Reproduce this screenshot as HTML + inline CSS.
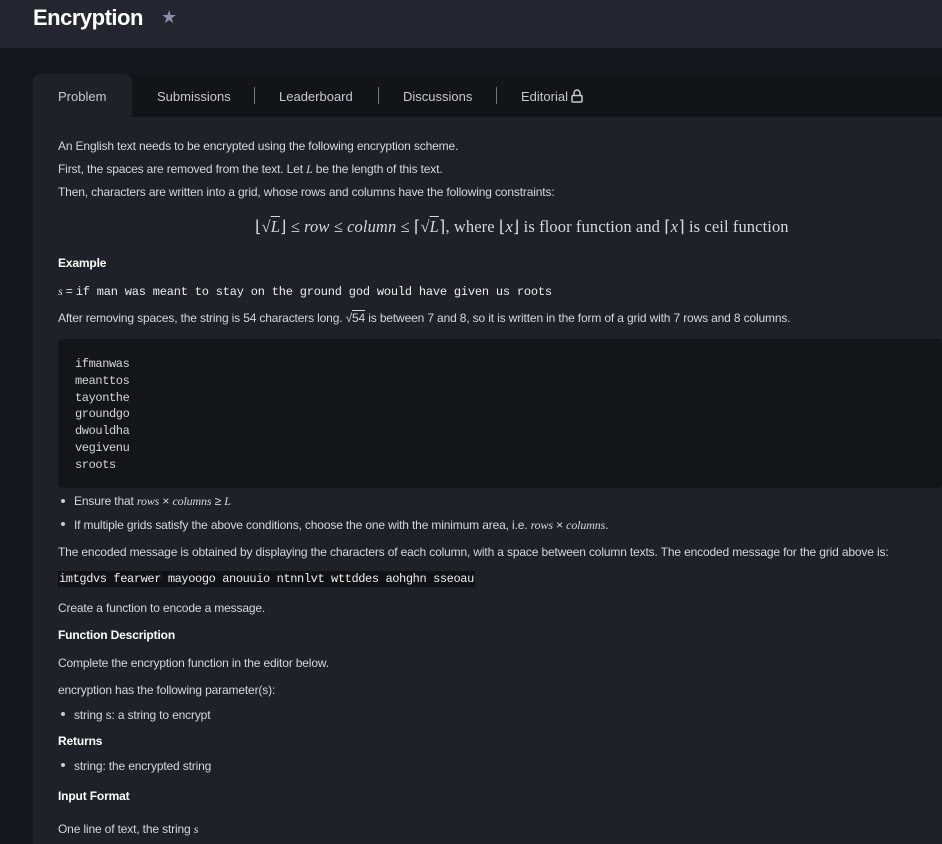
<!DOCTYPE html>
<html><head><meta charset="utf-8"><style>
*{margin:0;padding:0;box-sizing:border-box}
body{width:942px;height:844px;background:#16171c;overflow:hidden;font-family:"Liberation Sans",sans-serif;color:#d6d6de;position:relative}
.hdr{position:absolute;left:0;top:0;width:942px;height:48px;background:#24252e}
.title{position:absolute;left:33px;top:5px;font-size:22px;font-weight:bold;color:#fff;letter-spacing:-0.5px}
.star{position:absolute;left:161px;top:7px;font-size:18px;color:#8c8ca6}
.tabbar{position:absolute;left:33px;top:74px;width:909px;height:43px;background:#131418}
.tab{position:absolute;top:89px;font-size:13px;color:#c8c8d0}
.active{position:absolute;left:33px;top:74px;width:99px;height:44px;background:#1f2028;border-radius:7px 7px 0 0}
.sep{position:absolute;top:87px;width:1px;height:17px;background:#777}
.panel{position:absolute;left:33px;top:117px;width:909px;height:727px;background:#1f2028}
.t{position:absolute;left:58px;font-size:12px;letter-spacing:-0.15px;white-space:nowrap;color:#d6d6de}
.b{font-weight:bold;color:#fff}
.m{font-family:"Liberation Serif",serif;font-style:italic}
.code{position:absolute;left:58px;top:339px;width:884px;height:149px;background:#141519;border-radius:4px}
.mono{font-family:"Liberation Mono",monospace;letter-spacing:-0.4px}
.dot{position:absolute;left:61px;width:4px;height:4px;border-radius:50%;background:#ccc}
</style></head><body>
<div class="hdr"></div>
<div class="title">Encryption</div>
<div class="star">★</div>
<div class="tabbar"></div>
<div class="active"></div>
<div class="tab" style="left:58px">Problem</div>
<div class="tab" style="left:157px">Submissions</div>
<div class="sep" style="left:254px"></div>
<div class="tab" style="left:279px">Leaderboard</div>
<div class="sep" style="left:378px"></div>
<div class="tab" style="left:403px">Discussions</div>
<div class="sep" style="left:496px"></div>
<div class="tab" style="left:521px">Editorial</div>
<svg style="position:absolute;left:571px;top:89px" width="12" height="14" viewBox="0 0 12 14"><path d="M3 6V4a3 3 0 0 1 6 0v2" fill="none" stroke="#c8c8d0" stroke-width="1.5"/><rect x="1" y="6.5" width="10" height="6.5" rx="1" fill="none" stroke="#c8c8d0" stroke-width="1.5"/></svg>
<div class="panel"></div>
<div class="t" style="top:139px">An English text needs to be encrypted using the following encryption scheme.</div>
<div class="t" style="top:162px">First, the spaces are removed from the text. Let <span class="m">L</span> be the length of this text.</div>
<div class="t" style="top:185px">Then, characters are written into a grid, whose rows and columns have the following constraints:</div>
<div class="t" style="left:255px;top:217px;font-family:'Liberation Serif',serif;font-size:16.5px;letter-spacing:0.1px">⌊√<span style="text-decoration:overline"><i>L</i></span>⌋ ≤ <i>row</i> ≤ <i>column</i> ≤ ⌈√<span style="text-decoration:overline"><i>L</i></span>⌉, where ⌊<i>x</i>⌋ is floor function and ⌈<i>x</i>⌉ is ceil function</div>
<div class="t b" style="top:256px">Example</div>
<div class="t" style="top:284px"><span class="m">s</span> = <span class="mono" style="color:#eee;letter-spacing:-0.2px">if man was meant to stay on the ground god would have given us roots</span></div>
<div class="t" style="top:311px">After removing spaces, the string is 54 characters long. √<span style="text-decoration:overline">54</span> is between 7 and 8, so it is written in the form of a grid with 7 rows and 8 columns.</div>
<div class="code"></div>
<div class="t mono" style="left:75px;top:356px;line-height:16.8px">ifmanwas<br>meanttos<br>tayonthe<br>groundgo<br>dwouldha<br>vegivenu<br>sroots</div>
<div class="dot" style="top:499px"></div>
<div class="t" style="left:74px;top:494px">Ensure that <span class="m">rows</span> × <span class="m">columns</span> ≥ <span class="m">L</span></div>
<div class="dot" style="top:522px"></div>
<div class="t" style="left:74px;top:518px">If multiple grids satisfy the above conditions, choose the one with the minimum area, i.e. <span class="m">rows</span> × <span class="m">columns</span>.</div>
<div class="t" style="top:545px">The encoded message is obtained by displaying the characters of each column, with a space between column texts. The encoded message for the grid above is:</div>
<div class="t mono" style="top:571px;background:#111216;padding:1px 1px;color:#eee;letter-spacing:-0.4px">imtgdvs fearwer mayoogo anouuio ntnnlvt wttddes aohghn sseoau</div>
<div class="t" style="top:601px">Create a function to encode a message.</div>
<div class="t b" style="top:628px">Function Description</div>
<div class="t" style="top:656px">Complete the encryption function in the editor below.</div>
<div class="t" style="top:683px">encryption has the following parameter(s):</div>
<div class="dot" style="top:712px"></div>
<div class="t" style="left:74px;top:708px">string s: a string to encrypt</div>
<div class="t b" style="top:734px">Returns</div>
<div class="dot" style="top:763px"></div>
<div class="t" style="left:74px;top:759px">string: the encrypted string</div>
<div class="t b" style="top:789px">Input Format</div>
<div class="t" style="top:822px">One line of text, the string <span class="m">s</span></div>
</body></html>
